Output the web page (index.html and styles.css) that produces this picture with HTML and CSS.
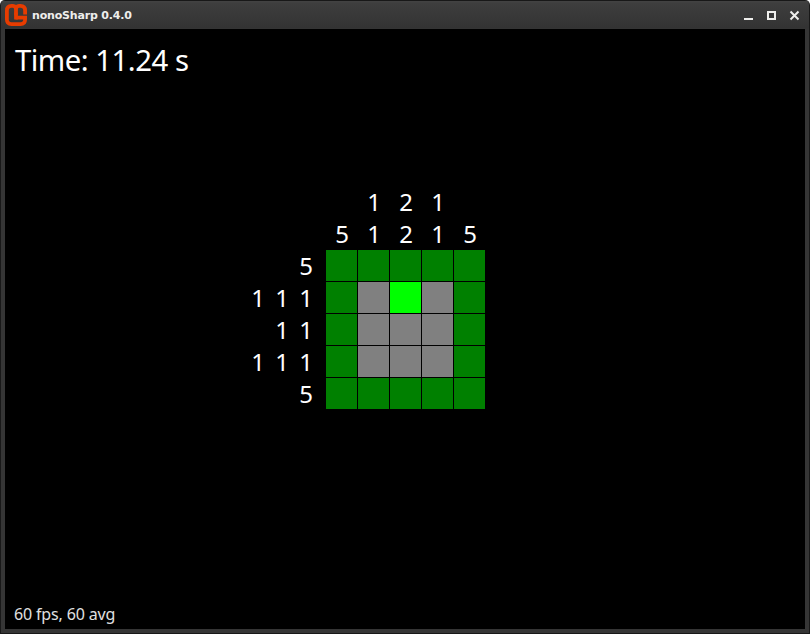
FILE: index.html
```html
<!DOCTYPE html>
<html lang="en">
<head>
<meta charset="utf-8">
<title>nonoSharp 0.4.0</title>
<link rel="stylesheet" href="styles.css">
</head>
<body>
<div class="window">
  <header class="titlebar">
    <svg class="logo" width="22" height="22" viewBox="0 0 22 22" fill="none" stroke="#e73c00" stroke-width="3.8">
      <path d="M11 10.8V5.5Q11 1.9 8 1.9H6.5Q1.9 1.9 1.9 6.5V15.5Q1.9 20.1 6.5 20.1H15.5Q20.1 20.1 20.1 15.5V13.6H10.5"/>
      <path d="M11 5.5Q11 1.9 14 1.9H15.5Q20.1 1.9 20.1 6.5V10.6"/>
      <path d="M11 8.5V15.5" />
    </svg>
    <h1 class="title">nonoSharp 0.4.0</h1>
    <svg class="controls" width="60" height="14" viewBox="0 0 60 14" fill="none" stroke="#eeeeec" stroke-width="2">
      <path d="M1 11H10"/>
      <rect x="25" y="4" width="7" height="7"/>
      <path d="M47.5 3.5L55.5 11.5M55.5 3.5L47.5 11.5"/>
    </svg>
  </header>
  <main class="game">
    <div class="time">Time: 11.24 s</div>
    <div class="puzzle">
      <div class="columns">
        <div class="column"><span>5</span></div>
        <div class="column"><span>1</span><span>1</span></div>
        <div class="column"><span>2</span><span>2</span></div>
        <div class="column"><span>1</span><span>1</span></div>
        <div class="column"><span>5</span></div>
      </div>
      <div class="rows">
        <div class="row"><span>5</span></div>
        <div class="row"><span>1</span><span>1</span><span>1</span></div>
        <div class="row"><span>1</span><span>1</span></div>
        <div class="row"><span>1</span><span>1</span><span>1</span></div>
        <div class="row"><span>5</span></div>
      </div>
      <div class="board">
        <i class="on"></i><i class="on"></i><i class="on"></i><i class="on"></i><i class="on"></i>
        <i class="on"></i><i></i><i class="hover"></i><i></i><i class="on"></i>
        <i class="on"></i><i></i><i></i><i></i><i class="on"></i>
        <i class="on"></i><i></i><i></i><i></i><i class="on"></i>
        <i class="on"></i><i class="on"></i><i class="on"></i><i class="on"></i><i class="on"></i>
      </div>
    </div>
    <div class="fps">60 fps, 60 avg</div>
  </main>
</div>
</body>
</html>
```
FILE: styles.css
```css
* { box-sizing: border-box; }
body { margin: 0; background: #fff; }
.window {
  width: 810px;
  height: 634px;
  display: flex;
  flex-direction: column;
  padding: 0 4px 4px;
  border: 1px solid #181818;
  border-top: 0;
  border-radius: 5px 5px 0 0;
  background: linear-gradient(#181818 1px, #424242 1px, #424242 2px, #3e3e3e 3px, #333 28px, #353535 29px);
}
.titlebar {
  height: 29px;
  display: flex;
  align-items: flex-start;
  padding-top: 4px;
}
.logo { flex: none; }
.title {
  margin: 5px 0 0 5px;
  flex: 1;
  font: bold 11px/14px "DejaVu Sans", sans-serif;
  letter-spacing: -0.18px;
  color: #eeeeec;
}
.controls { margin: 4px 2px 0 0; flex: none; }
.game {
  flex: 1;
  display: flex;
  flex-direction: column;
  background: #000;
  color: #fff;
  font-family: "Noto Sans", sans-serif;
}
.time {
  height: 160px;
  padding: 11px 0 0 10px;
  font-size: 29.33px;
  line-height: 40px;
  letter-spacing: -0.5px;
}
.puzzle {
  display: grid;
  grid-template-columns: 72px 160px;
  grid-template-rows: 61px 160px;
  column-gap: 8px;
  margin-left: 241px;
  font-size: 24px;
  line-height: 32px;
}
.columns { grid-column: 2; display: flex; align-items: flex-end; }
.column { width: 32px; display: flex; flex-direction: column; text-align: center; }
.rows { display: flex; flex-direction: column; }
.row { height: 32px; display: flex; justify-content: flex-end; }
.row span { width: 24px; text-align: center; }
.board {
  display: grid;
  grid-template-columns: repeat(5, 31px);
  grid-auto-rows: 31px;
  gap: 1px;
}
.board i { background: #808080; }
.board .on { background: #008000; }
.board .hover { background: #0f0; }
.fps {
  margin-top: auto;
  padding: 0 0 5px 9px;
  font-size: 16px;
  line-height: 20px;
  letter-spacing: -0.15px;
  color: #e0e0e0;
}
```
